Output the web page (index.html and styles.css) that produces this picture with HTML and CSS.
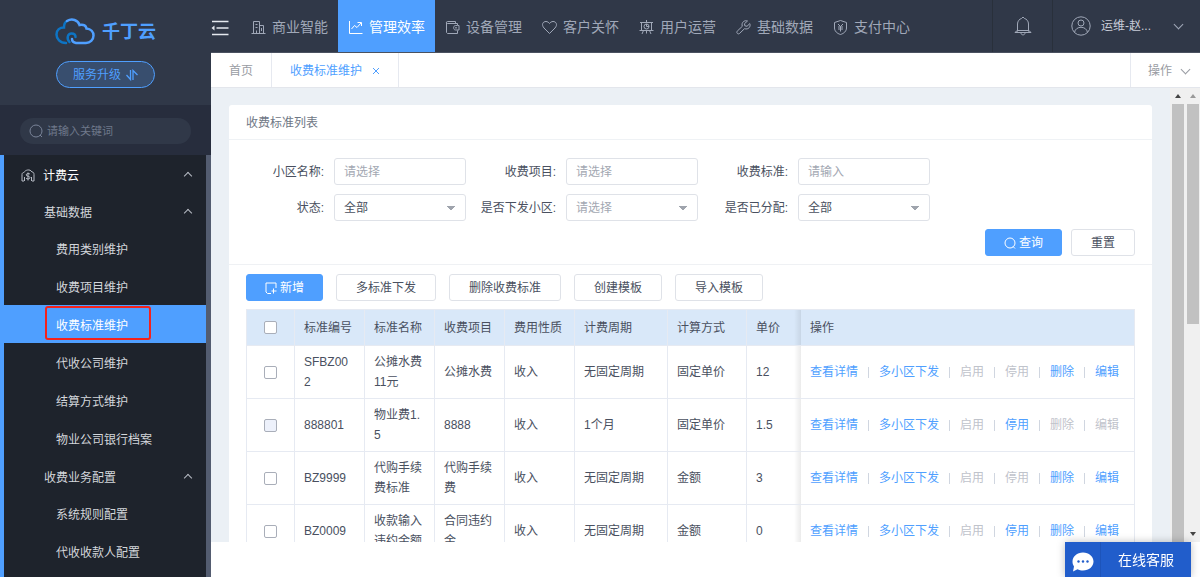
FILE: index.html
```
<!DOCTYPE html>
<html lang="zh-CN">
<head>
    <meta charset="UTF-8">
    <meta name="viewport" content="width=device-width, initial-scale=1.0">
    <title>收费标准维护</title>
    <link rel="stylesheet" href="styles.css">
</head>
<body>
    <aside class="sidebar">
        <div class="brand">
            <div class="logo">
                <svg width="40" height="27" viewBox="0 0 40 27" fill="none" stroke-width="2.500" stroke-linecap="round">
                    <path stroke="#0d74c4" d="M11 25C5 25 1.500 21 1.500 16.500C1.500 12 5 9.500 9 9.500C9 6 10 4 12 3M14.500 24C11 20 13 15.500 16.500 15.500C19 15.500 20.500 17 20.500 19"/>
                    <path stroke="#4f9fff" d="M12 3C17 0 23 2 24.500 7C29 6 31 8 31.500 10.500C36 11 38.500 14 38.500 17.500C38.500 22 35 25 31 25H21C18.500 24.500 17 23 17 21"/>
                </svg>
                <span>千丁云</span>
            </div>
            <button type="button" class="upgrade">服务升级
                <svg width="12" height="12" viewBox="0 0 12 12" fill="none" stroke="currentColor" stroke-width="1.300"><path d="M0.500 6L4.500 10.500V1M7 11V1.500L11.500 6"/></svg>
            </button>
        </div>
        <div class="search-area">
            <label class="search">
                <svg width="14" height="14" viewBox="0 0 14 14" fill="none" stroke="currentColor"><circle cx="7" cy="7" r="6"/><path d="M11 11L13 13"/></svg>
                <input type="text" placeholder="请输入关键词" aria-label="请输入关键词">
            </label>
        </div>
        <nav class="menu">
            <a href="#" class="menu-title menu-root">
                <svg width="14" height="13" viewBox="0 0 14 13" fill="none" stroke="currentColor"><path d="M3 12H1V5.500C1 4 2 3.500 3 3.500C4 1 9 -0.500 11 3C12.500 3 13 4 13 5.500V12H11M3.500 8V12M10.500 8V12"/><path d="M9 5.200C8.500 4.200 5.200 4.200 5.200 5.900C5.200 7.700 9 6.700 9 8.700C9 10.300 5.500 10.300 5 9.100M7 3.500V11.500"/></svg>
                计费云<i class="chevron up"></i>
            </a>
            <a href="#" class="menu-title">基础数据<i class="chevron up"></i></a>
            <a href="#" class="menu-item">费用类别维护</a>
            <a href="#" class="menu-item">收费项目维护</a>
            <a href="#" class="menu-item active">收费标准维护<span class="marker"></span></a>
            <a href="#" class="menu-item">代收公司维护</a>
            <a href="#" class="menu-item">结算方式维护</a>
            <a href="#" class="menu-item">物业公司银行档案</a>
            <a href="#" class="menu-title">收费业务配置<i class="chevron up"></i></a>
            <a href="#" class="menu-item">系统规则配置</a>
            <a href="#" class="menu-item">代收收款人配置</a>
        </nav>
    </aside>

    <div class="main">
        <header class="topbar">
            <button type="button" class="collapse" aria-label="收起菜单">
                <svg width="18" height="16" viewBox="0 0 18 16" fill="none" stroke="#e4e8ee" stroke-width="1.500"><path d="M1 1.500H17.500M5.500 8H17.500M1 14.500H17.500"/><path fill="#e4e8ee" stroke="none" d="M0.500 8L3.500 5.500V10.500Z"/></svg>
            </button>
            <nav class="topnav">
                <a href="#"><svg viewBox="0 0 15 15"><path d="M0.500 13.500H14.500M2.500 13.500V1.500H8.500V13.500M8.500 5.500H12.500V13.500M4.500 4.500H6.500M4.500 7.500H6.500M5.500 13V10.500M10.500 8V11"/></svg>商业智能</a>
                <a href="#" class="active"><svg viewBox="0 0 15 15"><path d="M1.500 1V13.500H14.500M3.500 9L6.500 5.500L9 7.500L13 3M9.500 2.500H13.500V6"/></svg>管理效率</a>
                <a href="#"><svg viewBox="0 0 15 15"><path d="M12.500 5V3.500H2.500C1 3.500 1 1.500 2.500 1.500H10.500V3.500M1.500 2.500V12.500L2.500 13.500H12.500V10.500M12.500 5.500H10.500C8 5.500 8 10 10.500 10H14V5.500Z"/><circle cx="11" cy="7.800" r="0.500"/></svg>设备管理</a>
                <a href="#"><svg viewBox="0 0 15 15"><path d="M7.500 13.500L2 8C-1 4.500 1 1.500 4 1.500C5.500 1.500 6.800 2.500 7.500 3.500C8.200 2.500 9.500 1.500 11 1.500C14 1.500 16 4.500 13 8Z"/></svg>客户关怀</a>
                <a href="#"><svg viewBox="0 0 15 15"><path d="M1 2.500H14M2.500 2.500V10.500H12.500V2.500M0.500 10.500H14.500M7.500 0V2.500M4.500 10.500L3 14M10.500 10.500L12 14M7.500 10.500V13.500"/><circle cx="7.500" cy="6.500" r="2.500"/><path d="M7.500 4V6.500H10"/></svg>用户运营</a>
                <a href="#"><svg viewBox="0 0 15 15"><path d="M11.500 1C8.500 -0.200 5 2.500 6.300 6.300L1.200 11.200C0 12.500 1.800 14.800 3.500 13.500L8.500 8.700C12.500 10 15 6.500 13.800 3.600L11 6.300L8.800 5.800L8.500 3.700Z"/></svg>基础数据</a>
                <a href="#"><svg viewBox="0 0 15 15"><path d="M7.500 0.500L13.500 2.500V8C13.500 11 11 13.500 7.500 14.500C4 13.500 1.500 11 1.500 8V2.500ZM5 4L7.500 6.500L10 4M7.500 6.500V11.500M5 7H10M5 9H10"/></svg>支付中心</a>
            </nav>
            <button type="button" class="bell" aria-label="消息">
                <svg width="18" height="20" viewBox="0 0 18 20" fill="none" stroke="currentColor"><path d="M1 16.500H17M3 16L3.500 14V8C3.500 5 5.500 3 7.500 2.500L9 1L10.500 2.500C12.500 3 14.500 5 14.500 8V14L15 16M3 14.500H15M1 16.500L3 14.500M17 16.500L15 14.500M7 17C7 19.500 11 19.500 11 17"/></svg>
            </button>
            <button type="button" class="user">
                <svg width="20" height="20" viewBox="0 0 20 20" fill="none" stroke="currentColor"><circle cx="10" cy="10" r="9.200"/><circle cx="10" cy="7" r="3"/><path d="M3.500 16.500C4.500 9.500 15.500 9.500 16.500 16.500"/></svg>
                <span>运维-赵...</span>
                <i class="chevron"></i>
            </button>
        </header>

        <div class="tabs">
            <a href="#" class="tab">首页</a>
            <a href="#" class="tab current">收费标准维护
                <svg width="8" height="8" viewBox="0 0 8 8" stroke="currentColor"><path d="M1 1L7 7M7 1L1 7"/></svg>
            </a>
            <button type="button" class="tab-actions">操作<i class="chevron"></i></button>
        </div>

        <div class="content">
            <main class="page">
                <section class="card">
                    <h1>收费标准列表</h1>
                    <form class="filters">
                        <div class="fields">
                            <div class="field">
                                <label for="community">小区名称:</label>
                                <input type="text" id="community" placeholder="请选择">
                            </div>
                            <div class="field">
                                <label for="item">收费项目:</label>
                                <input type="text" id="item" placeholder="请选择">
                            </div>
                            <div class="field">
                                <label for="standard">收费标准:</label>
                                <input type="text" id="standard" placeholder="请输入">
                            </div>
                            <div class="field">
                                <label for="status">状态:</label>
                                <select id="status"><option>全部</option></select>
                            </div>
                            <div class="field">
                                <label for="issued">是否下发小区:</label>
                                <select id="issued" class="empty"><option>请选择</option></select>
                            </div>
                            <div class="field">
                                <label for="assigned">是否已分配:</label>
                                <select id="assigned"><option>全部</option></select>
                            </div>
                        </div>
                        <div class="submit-row">
                            <button type="button" class="btn primary"><svg width="12" height="12" viewBox="0 0 12 12" fill="none" stroke="currentColor"><circle cx="6" cy="6" r="5"/><path d="M9 9.500L11 11.500"/></svg>查询</button>
                            <button type="button" class="btn">重置</button>
                        </div>
                    </form>
                    <div class="toolbar">
                        <button type="button" class="btn primary"><svg width="12" height="12" viewBox="0 0 12 12" fill="none" stroke="currentColor"><path d="M6 11.500H2.500L1 10V1H11V6M8.500 6.500V11.500M6.500 9H11.500"/></svg>新增</button>
                        <button type="button" class="btn">多标准下发</button>
                        <button type="button" class="btn">删除收费标准</button>
                        <button type="button" class="btn">创建模板</button>
                        <button type="button" class="btn">导入模板</button>
                    </div>
                    <table>
                        <colgroup>
                            <col class="col-check"><col class="col-text"><col class="col-text"><col class="col-text"><col class="col-text">
                            <col class="col-cycle"><col class="col-method"><col class="col-price"><col>
                        </colgroup>
                        <thead>
                            <tr>
                                <th class="check"><input type="checkbox" aria-label="全选"></th>
                                <th>标准编号</th>
                                <th>标准名称</th>
                                <th>收费项目</th>
                                <th>费用性质</th>
                                <th>计费周期</th>
                                <th>计算方式</th>
                                <th class="price">单价</th>
                                <th>操作</th>
                            </tr>
                        </thead>
                        <tbody>
                            <tr>
                                <td class="check"><input type="checkbox" aria-label="SFBZ002"></td>
                                <td>SFBZ002</td>
                                <td>公摊水费11元</td>
                                <td>公摊水费</td>
                                <td>收入</td>
                                <td>无固定周期</td>
                                <td>固定单价</td>
                                <td class="price">12</td>
                                <td><div class="actions"><a href="#">查看详情</a><a href="#">多小区下发</a><a class="off">启用</a><a class="off">停用</a><a href="#">删除</a><a href="#">编辑</a></div></td>
                            </tr>
                            <tr>
                                <td class="check"><input type="checkbox" disabled aria-label="888801"></td>
                                <td>888801</td>
                                <td>物业费1.5</td>
                                <td>8888</td>
                                <td>收入</td>
                                <td>1个月</td>
                                <td>固定单价</td>
                                <td class="price">1.5</td>
                                <td><div class="actions"><a href="#">查看详情</a><a href="#">多小区下发</a><a class="off">启用</a><a href="#">停用</a><a class="off">删除</a><a class="off">编辑</a></div></td>
                            </tr>
                            <tr>
                                <td class="check"><input type="checkbox" aria-label="BZ9999"></td>
                                <td>BZ9999</td>
                                <td>代购手续费标准</td>
                                <td>代购手续费</td>
                                <td>收入</td>
                                <td>无固定周期</td>
                                <td>金额</td>
                                <td class="price">3</td>
                                <td><div class="actions"><a href="#">查看详情</a><a href="#">多小区下发</a><a class="off">启用</a><a class="off">停用</a><a href="#">删除</a><a href="#">编辑</a></div></td>
                            </tr>
                            <tr>
                                <td class="check"><input type="checkbox" aria-label="BZ0009"></td>
                                <td>BZ0009</td>
                                <td>收款输入违约金额</td>
                                <td>合同违约金</td>
                                <td>收入</td>
                                <td>无固定周期</td>
                                <td>金额</td>
                                <td class="price">0</td>
                                <td><div class="actions"><a href="#">查看详情</a><a href="#">多小区下发</a><a class="off">启用</a><a href="#">停用</a><a href="#">删除</a><a href="#">编辑</a></div></td>
                            </tr>
                        </tbody>
                    </table>
                </section>
            </main>
            <!-- inner and outer scroll bars -->
            <div class="scrollbar inner"><i class="arrow"></i><div class="thumb"></div></div>
            <div class="scrollbar outer"><i class="arrow"></i><div class="thumb"></div><i class="arrow down"></i></div>
        </div>
    </div>

    <button type="button" class="chat">
        <span class="chat-icon">
            <svg width="22" height="20" viewBox="0 0 22 20"><path fill="#fff" d="M11 0.500C17 0.500 21.500 4.500 21.500 9.500C21.500 14.500 17 18.500 11 18.500C9 18.500 7 18 5.500 17.200L1 19.500L2 14.500C1 13 0.500 11.500 0.500 9.500C0.500 4.500 5 0.500 11 0.500Z"/><g fill="#215dcb"><circle cx="6.500" cy="9.500" r="1.200"/><circle cx="11" cy="9.500" r="1.200"/><circle cx="15.500" cy="9.500" r="1.200"/></g></svg>
        </span>
        <span class="chat-text">在线客服</span>
    </button>
</body>
</html>
```
FILE: styles.css
```
* {
    box-sizing: border-box;
}
body {
    margin: 0;
    height: 100vh;
    display: flex;
    overflow: hidden;
    background-color: #fff;
    color: #495060;
    font-family: "Liberation Sans", "Noto Sans CJK SC", sans-serif;
    font-size: 12px;
    line-height: 20px;
}
a {
    color: inherit;
    text-decoration: none;
}
button, input, select {
    font: inherit;
    color: inherit;
}
button {
    padding: 0;
    border: none;
    background: none;
    cursor: pointer;
}
svg {
    flex: none;
}
.chevron {
    width: 7px;
    height: 7px;
    border: solid currentColor;
    border-width: 0 1px 1px 0;
    transform: translateY(-2px) rotate(45deg);
}
.chevron.up {
    transform: rotate(225deg);
}

/* Sidebar */
.sidebar {
    width: 211px;
    flex: none;
    display: flex;
    flex-direction: column;
    background-color: #303848;
}
.brand {
    height: 105px;
    padding-top: 17px;
    display: flex;
    flex-direction: column;
    align-items: center;
    gap: 15px;
    color: #4f9fff;
}
.logo {
    display: flex;
    align-items: center;
    gap: 7px;
    height: 29px;
    font-size: 18px;
    font-weight: bold;
}
.upgrade {
    height: 27px;
    padding: 0 16px;
    display: flex;
    align-items: center;
    gap: 5px;
    border: 1px solid #4f9fff;
    border-radius: 14px;
    background-color: #384e6e;
}
.search-area {
    height: 50px;
    padding: 13px 20px 0;
    background-color: #272d3d;
}
.search {
    height: 26px;
    padding-left: 9px;
    display: flex;
    align-items: center;
    gap: 4px;
    border-radius: 13px;
    background-color: #303848;
    color: #7a8499;
    font-size: 11px;
}
.search input {
    flex: 1;
    min-width: 0;
    padding: 0;
    border: none;
    outline: none;
    background: none;
}
.search input::placeholder {
    color: #6f788b;
}
.menu {
    flex: 1;
    min-height: 0;
    border-left: 4px solid #4f9fff;
    border-right: 5px solid #535c70;
    background-color: #1e232c;
    color: #d3d6db;
}
.menu a {
    display: flex;
    align-items: center;
    height: 38px;
    padding-top: 4px;
    padding-left: 52px;
}
.menu .menu-title {
    height: 37px;
    padding-left: 40px;
    padding-right: 15px;
}
.menu .menu-root {
    padding-left: 17px;
    gap: 8px;
    color: #fff;
}
.menu-root svg {
    color: #b6bbc4;
}
.menu .chevron {
    width: 6px;
    height: 6px;
    margin-left: auto;
    color: #b6bbc4;
}
.menu .active {
    position: relative;
    background-color: #4f9fff;
    color: #fff;
}
.marker {
    position: absolute;
    top: 1px;
    left: 41px;
    width: 106px;
    height: 34px;
    border: 2px solid #f5221b;
    border-radius: 3px;
}

/* Top bar */
.main {
    flex: 1;
    min-width: 0;
    display: flex;
    flex-direction: column;
    padding-bottom: 35px;
}
.topbar {
    height: 53px;
    flex: none;
    display: flex;
    background-color: #303848;
    border-bottom: 1px solid #4a5160;
    color: #a0a8b8;
}
.collapse {
    width: 18px;
    margin-right: 12px;
    display: flex;
    align-items: center;
    padding-top: 4px;
}
.topnav {
    flex: 1;
    display: flex;
    font-size: 14px;
}
.topnav a {
    display: flex;
    align-items: center;
    gap: 6px;
    padding: 2px 10px 0;
    white-space: nowrap;
}
.topnav svg {
    width: 15px;
    height: 15px;
    fill: none;
    stroke: currentColor;
}
.topnav .active {
    background-color: #4f9fff;
    color: #fff;
}
.bell {
    width: 61px;
    display: flex;
    align-items: center;
    justify-content: center;
    border-left: 1px solid #29303b;
    border-right: 1px solid #29303b;
}
.user {
    display: flex;
    align-items: center;
    width: 147px;
    padding: 0 18px;
    gap: 10px;
}
.user span {
    color: #c8cdd8;
}
.user .chevron {
    margin-left: auto;
}

/* Tabs */
.tabs {
    height: 35px;
    flex: none;
    display: flex;
    border-bottom: 1px solid #e3e6ec;
    color: #999ca3;
}
.tab {
    display: flex;
    align-items: center;
    gap: 10px;
    padding: 2px 18px 0;
    border-right: 1px solid #e6e9f0;
}
.tab.current {
    color: #4f9fff;
}
.tab-actions {
    display: flex;
    align-items: center;
    gap: 10px;
    margin-left: auto;
    padding: 2px 11px 0 17px;
    border-left: 1px solid #e6e9f0;
}

/* Content */
.content {
    flex: 1;
    min-height: 0;
    display: flex;
    overflow: hidden;
    background-color: #ebf0f5;
}
.page {
    flex: 1;
    min-width: 0;
    padding: 17px 18px 0;
}
.card {
    background-color: #fff;
    border-radius: 3px;
}
h1 {
    margin: 0;
    padding: 8px 17px 6px;
    border-bottom: 1px solid #eff2f5;
    font-size: 12px;
    font-weight: normal;
    color: #6f7785;
}
.filters {
    padding: 18px 17px 8px 5px;
    border-bottom: 1px solid #eff1f4;
}
.fields {
    display: grid;
    grid-template-columns: repeat(auto-fill, 232px);
    justify-content: start;
    gap: 9px 0;
}
.field {
    display: flex;
    align-items: center;
    justify-content: flex-end;
    gap: 10px;
}
.field input, .field select {
    width: 132px;
    height: 27px;
    padding: 0 9px;
    border: 1px solid #dfe2e8;
    border-radius: 3px;
    background-color: #fff;
    appearance: none;
}
.field select {
    background-image: linear-gradient(to top right, transparent 50%, #9fa4ad 50%), linear-gradient(to top left, transparent 50%, #9fa4ad 50%);
    background-position: right 14px center, right 10px center;
    background-size: 4px 4px;
    background-repeat: no-repeat;
}
.field input::placeholder, .field .empty {
    color: #a3a8b2;
}
.submit-row {
    display: flex;
    justify-content: flex-end;
    gap: 9px;
    margin-top: 8px;
}
.btn {
    height: 27px;
    padding: 0 19px;
    display: flex;
    align-items: center;
    gap: 3px;
    border: 1px solid #dfe2e8;
    border-radius: 3px;
    background-color: #fff;
}
.btn.primary {
    padding: 0 18px;
    border-color: #4f9fff;
    background-color: #4f9fff;
    color: #fff;
}
.toolbar {
    display: flex;
    gap: 13px;
    padding: 9px 17px 8px;
}

/* Table */
table {
    width: calc(100% - 34px);
    margin: 0 17px;
    table-layout: fixed;
    border-collapse: separate;
    border-spacing: 0;
    border: solid #e6eaf2;
    border-width: 1px 0 0 1px;
}
.col-check {
    width: 48px;
}
.col-text {
    width: 70px;
}
.col-cycle {
    width: 93px;
}
.col-method {
    width: 79px;
}
.col-price {
    width: 54px;
}
th, td {
    padding: 0 11px 0 9px;
    border: solid #e6eaf2;
    border-width: 0 1px 1px 0;
    text-align: left;
    word-break: break-all;
}
th {
    height: 36px;
    font-weight: normal;
    background-color: #d9e8f9;
}
td {
    height: 53px;
}
.check {
    padding: 0;
    text-align: center;
    line-height: 0;
}
.check input {
    appearance: none;
    width: 13px;
    height: 13px;
    margin: 0;
    border: 1px solid #a9aeb9;
    border-radius: 2px;
    background-color: #fff;
    vertical-align: middle;
}
.check input:disabled {
    background-color: #edf1fb;
}
.price {
    border-right: none;
    background-image: linear-gradient(to right, transparent, rgba(0, 0, 0, 0.08));
    background-position: right top;
    background-size: 7px 100%;
    background-repeat: no-repeat;
}
.actions {
    display: flex;
    align-items: center;
    white-space: nowrap;
    color: #4f9fff;
}
.actions a + a::before {
    content: "";
    display: inline-block;
    width: 1px;
    height: 11px;
    margin: 0 10px;
    background-color: #d0d6e0;
    vertical-align: -2px;
}
.actions .off {
    color: #bfc3cb;
}

/* Scroll bars */
.scrollbar {
    width: 15px;
    flex: none;
    display: flex;
    flex-direction: column;
    align-items: center;
    padding-top: 6px;
    background-color: #f0f0f0;
}
.arrow {
    border: solid transparent;
    border-width: 0 3px 4px;
    border-bottom-color: #444;
    margin-bottom: 6px;
}
.outer .arrow {
    border-bottom-color: #999;
}
.outer .arrow.down {
    border-width: 4px 3px 0;
    border-top-color: #444;
    margin-top: auto;
}
.thumb {
    width: 12px;
    flex: 1;
    background-color: #c1c1c1;
}
.outer .thumb {
    flex: 0 1 49%;
}

/* Customer service */
.chat {
    position: fixed;
    right: 9px;
    bottom: 0;
    height: 35px;
    display: flex;
    align-items: center;
    background-color: #215dcb;
    box-shadow: 0 0 8px rgba(0, 0, 0, 0.25);
    color: #fff;
    font-size: 14px;
}
.chat-icon {
    width: 36px;
    height: 35px;
    display: flex;
    align-items: center;
    justify-content: center;
    padding-top: 4px;
    border-right: 1px solid #1d54ba;
}
.chat-text {
    padding: 0 17px;
}
```
